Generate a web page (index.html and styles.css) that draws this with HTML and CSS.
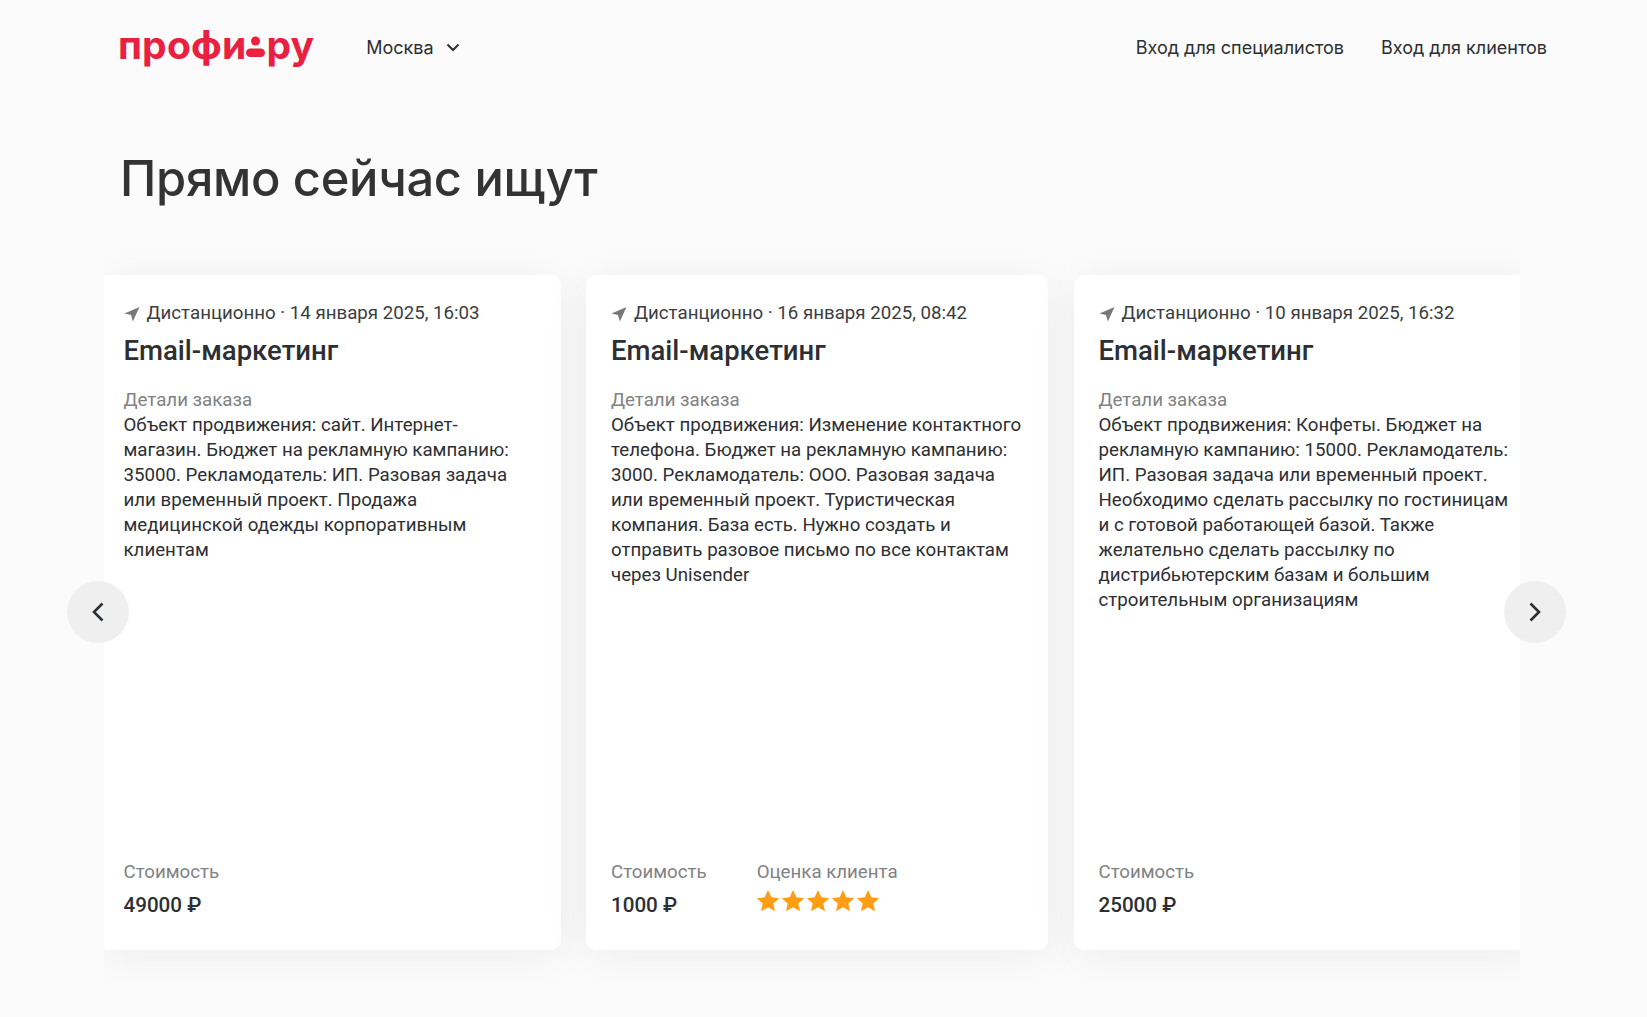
FILE: index.html
```html
<!DOCTYPE html>
<html lang="ru">
<head>
  <meta charset="UTF-8">
  <title>Профи.ру</title>
  <link rel="stylesheet" href="styles.css">
</head>
<body>
  <header class="header">
    <div class="header-left">
      <a class="logo" href="#">
        <span>профи</span>
        <svg class="logo-mark" width="19" height="22" viewBox="0 0 19 22"><circle cx="9.500" cy="5" r="4.500" fill="#e9203f"/><rect x="0" y="12.500" width="19" height="8.500" rx="4.250" fill="#e9203f"/></svg>
        <span>ру</span>
      </a>
      <button class="city">
        Москва
        <svg width="14" height="9" viewBox="0 0 14 9"><path d="M1.500 1.500 7 7l5.500-5.500" fill="none" stroke="#2c2f33" stroke-width="2"/></svg>
      </button>
    </div>
    <nav class="header-nav">
      <a href="#">Вход для специалистов</a>
      <a href="#">Вход для клиентов</a>
    </nav>
  </header>

  <h1 class="page-title">Прямо сейчас ищут</h1>

  <section class="carousel">
    <div class="track">
      <article class="card">
        <div class="meta">
          <svg class="meta-icon" width="16" height="16" viewBox="0 0 16 16"><path d="M15.500 1 .5 7.500l6.500 1.600L8.800 15.500z" fill="#77797c"/></svg>
          Дистанционно · 14 января 2025, 16:03
        </div>
        <h2 class="card-title">Email-маркетинг</h2>
        <div class="label">Детали заказа</div>
        <p class="details">Объект продвижения: сайт. Интернет-<br>магазин. Бюджет на рекламную кампанию: 35000. Рекламодатель: ИП. Разовая задача или временный проект. Продажа медицинской одежды корпоративным клиентам</p>
        <div class="card-footer">
          <div class="price-col">
            <div class="label">Стоимость</div>
            <div class="price">49000 ₽</div>
          </div>
        </div>
      </article>

      <article class="card">
        <div class="meta">
          <svg class="meta-icon" width="16" height="16" viewBox="0 0 16 16"><path d="M15.500 1 .5 7.500l6.500 1.600L8.800 15.500z" fill="#77797c"/></svg>
          Дистанционно · 16 января 2025, 08:42
        </div>
        <h2 class="card-title">Email-маркетинг</h2>
        <div class="label">Детали заказа</div>
        <p class="details">Объект продвижения: Изменение контактного телефона. Бюджет на рекламную кампанию: 3000. Рекламодатель: ООО. Разовая задача или временный проект. Туристическая компания. База есть. Нужно создать и отправить разовое письмо по все контактам через Unisender</p>
        <div class="card-footer">
          <div class="price-col">
            <div class="label">Стоимость</div>
            <div class="price">1000 ₽</div>
          </div>
          <div class="rating-col">
            <div class="label">Оценка клиента</div>
            <div class="stars">
              <svg width="24" height="24" viewBox="0 0 24 24"><path d="M12 1l3.300 7.300 7.900.9-5.900 5.300 1.700 7.800L12 18.300l-7 4 1.700-7.800L.8 9.200l7.900-.9z" fill="#ff9d14"/></svg>
              <svg width="24" height="24" viewBox="0 0 24 24"><path d="M12 1l3.300 7.300 7.900.9-5.900 5.300 1.700 7.800L12 18.300l-7 4 1.700-7.800L.8 9.200l7.900-.9z" fill="#ff9d14"/></svg>
              <svg width="24" height="24" viewBox="0 0 24 24"><path d="M12 1l3.300 7.300 7.900.9-5.900 5.300 1.700 7.800L12 18.300l-7 4 1.700-7.800L.8 9.200l7.900-.9z" fill="#ff9d14"/></svg>
              <svg width="24" height="24" viewBox="0 0 24 24"><path d="M12 1l3.300 7.300 7.900.9-5.900 5.300 1.700 7.800L12 18.300l-7 4 1.700-7.800L.8 9.200l7.900-.9z" fill="#ff9d14"/></svg>
              <svg width="24" height="24" viewBox="0 0 24 24"><path d="M12 1l3.300 7.300 7.900.9-5.900 5.300 1.700 7.800L12 18.300l-7 4 1.700-7.800L.8 9.200l7.900-.9z" fill="#ff9d14"/></svg>
            </div>
          </div>
        </div>
      </article>

      <article class="card">
        <div class="meta">
          <svg class="meta-icon" width="16" height="16" viewBox="0 0 16 16"><path d="M15.500 1 .5 7.500l6.500 1.600L8.800 15.500z" fill="#77797c"/></svg>
          Дистанционно · 10 января 2025, 16:32
        </div>
        <h2 class="card-title">Email-маркетинг</h2>
        <div class="label">Детали заказа</div>
        <p class="details">Объект продвижения: Конфеты. Бюджет на рекламную кампанию: 15000. Рекламодатель: ИП. Разовая задача или временный проект. Необходимо сделать рассылку по гостиницам и с готовой работающей базой. Также желательно сделать рассылку по дистрибьютерским базам и большим строительным организациям</p>
        <div class="card-footer">
          <div class="price-col">
            <div class="label">Стоимость</div>
            <div class="price">25000 ₽</div>
          </div>
        </div>
      </article>
    </div>

    <button class="arrow arrow-prev">
      <svg width="14" height="22" viewBox="0 0 14 22"><path d="M11.500 2.500 3 11l8.500 8.500" fill="none" stroke="#2c2f33" stroke-width="2.600"/></svg>
    </button>
    <button class="arrow arrow-next">
      <svg width="14" height="22" viewBox="0 0 14 22"><path d="M2.500 2.500 11 11l-8.500 8.500" fill="none" stroke="#2c2f33" stroke-width="2.600"/></svg>
    </button>
  </section>
</body>
</html>
```

FILE: styles.css
```css
* { margin: 0; padding: 0; box-sizing: border-box; }
html, body {
  height: 100%;
  overflow: hidden;
}
body {
  font-family: 'Roboto', sans-serif;
  background: #fbfbfb;
  color: #2c2f33;
}
a {
  color: inherit;
  text-decoration: none;
}
button {
  border: 0;
  background: none;
  font: inherit;
  color: inherit;
  cursor: pointer;
}
.header {
  display: flex;
  align-items: center;
  justify-content: space-between;
  height: 94px;
  padding: 0 100px 0 118px;
}
.header-left {
  display: flex;
  align-items: center;
  gap: 52px;
}
.logo {
  display: flex;
  align-items: center;
  margin-bottom: 6px;
  font-family: 'Inter', sans-serif;
  font-weight: 700;
  font-size: 39px;
  line-height: 1;
  letter-spacing: 0.2px;
  color: #e9203f;
}
.logo-mark {
  margin: 5px 1px 0 0;
}
.city {
  display: flex;
  align-items: center;
  gap: 12px;
  font-family: 'Inter', sans-serif;
  font-size: 18px;
}
.header-nav {
  display: flex;
  gap: 37px;
  font-family: 'Inter', sans-serif;
  font-size: 18px;
}
.page-title {
  margin: 56px 0 0 120px;
  font-family: 'Inter', sans-serif;
  font-size: 48.800px;
  font-weight: 450;
  line-height: 58px;
  letter-spacing: -0.3px;
  color: #333;
}
.carousel {
  position: relative;
  margin-top: 17px;
  height: 802px;
}
.track {
  display: flex;
  gap: 25.500px;
  margin: 0 127px 0 104px;
  padding: 50px 0 0;
  height: 100%;
  overflow: hidden;
}
.track .card:first-child {
  margin-left: -5.500px;
}
.card {
  display: flex;
  flex-direction: column;
  flex: 0 0 462px;
  height: 675px;
  padding: 26px 25px 32px;
  background: #fff;
  border-radius: 10px;
  box-shadow: 0 6px 48px rgba(0, 0, 0, 0.06);
}
.meta {
  display: flex;
  align-items: center;
  gap: 7px;
  font-size: 18.700px;
  line-height: 25px;
  color: #3a3d41;
}
.meta-icon {
  flex: none;
}
.card-title {
  margin-top: 7px;
  font-size: 27.500px;
  font-weight: 500;
  line-height: 36px;
  color: #2c2f33;
}
.label {
  font-size: 18.700px;
  line-height: 25px;
  color: #808285;
}
.card-title + .label {
  margin-top: 19px;
}
.details {
  font-size: 18.700px;
  line-height: 25px;
  color: #2c2f33;
}
.card-footer {
  display: flex;
  gap: 50px;
  margin-top: auto;
}
.price {
  margin-top: 7px;
  font-size: 20.600px;
  font-weight: 500;
  line-height: 26px;
}
.stars {
  display: flex;
  gap: 1px;
  margin-top: 4px;
  margin-left: -1px;
}
.arrow {
  position: absolute;
  top: 356px;
  display: flex;
  align-items: center;
  justify-content: center;
  width: 62px;
  height: 62px;
  border-radius: 50%;
  background: #efefef;
}
.arrow-prev { left: 67px; }
.arrow-next { left: 1504px; }
```
